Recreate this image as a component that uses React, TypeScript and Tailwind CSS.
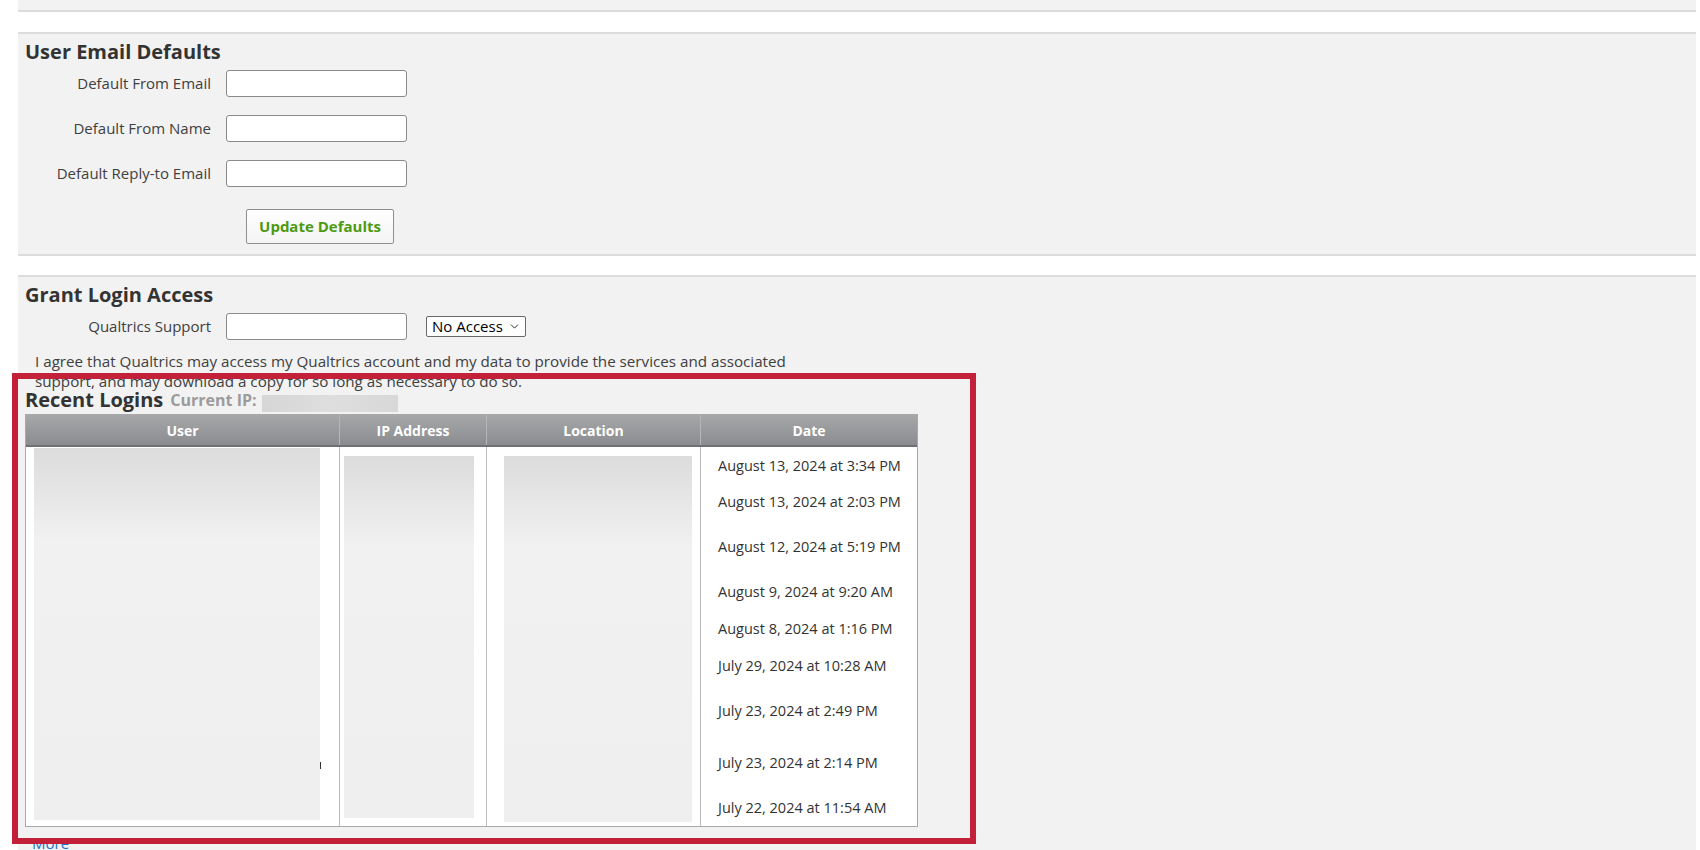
import { ChevronDown } from "lucide-react";

const emailFields = ["Default From Email", "Default From Name", "Default Reply-to Email"];

// row heights follow the (hidden) user cells, so every date gets its own slot
const logins = [
  { date: "August 13, 2024 at 3:34 PM", h: "h-[36px]" },
  { date: "August 13, 2024 at 2:03 PM", h: "h-[45px]" },
  { date: "August 12, 2024 at 5:19 PM", h: "h-[45px]" },
  { date: "August 9, 2024 at 9:20 AM", h: "h-[37px]" },
  { date: "August 8, 2024 at 1:16 PM", h: "h-[37px]" },
  { date: "July 29, 2024 at 10:28 AM", h: "h-[45px]" },
  { date: "July 23, 2024 at 2:49 PM", h: "h-[52px]" },
  { date: "July 23, 2024 at 2:14 PM", h: "h-[45px]" },
  { date: "July 22, 2024 at 11:54 AM", h: "h-[20px]" },
];

const TextInput = () => (
  <input
    type="text"
    className="w-[181px] h-[27px] bg-white border border-[#8a8a8a] rounded-[3px] px-1 text-[15px] outline-none"
  />
);

const Redacted = ({ className }: { className: string }) => (
  <div
    className={
      "bg-linear-to-b from-[#dcdcdc] via-[#f1f1f1] via-25% to-[#efefef] " + className
    }
  />
);

const App = () => {
  return (
    <div className="relative h-[850px] overflow-hidden bg-white font-['Open_Sans',sans-serif] text-[#404040]">
      <div className="pl-[18px] pr-[4px]">
        {/* tail of the section above */}
        <div className="h-[12px] bg-[#f2f2f2] border-b-2 border-[#dcdcdc]" />

        {/* User Email Defaults */}
        <section className="mt-[20px] bg-[#f2f2f2] border-y-2 border-[#dcdcdc] px-[7px] pt-[6px] pb-[10px]">
          <h2 className="text-[20px] leading-[24px] font-bold text-[#333]">User Email Defaults</h2>
          <div className="mt-[6px] flex flex-col gap-[18px]">
            {emailFields.map((label) => (
              <div key={label} className="flex items-center gap-[15px]">
                <label className="w-[186px] text-right text-[15px] leading-[27px]">{label}</label>
                <TextInput />
              </div>
            ))}
          </div>
          <button className="mt-[22px] ml-[221px] w-[148px] h-[35px] bg-linear-to-b from-white to-[#f4f4f4] border border-[#8f8f8f] rounded-[2px] text-[15px] font-bold text-[#4d9a12]">
            Update Defaults
          </button>
        </section>

        {/* Grant Login Access */}
        <section className="mt-[19px] bg-[#f2f2f2] border-t-2 border-[#dcdcdc] px-[7px] pt-[6px] pb-[40px]">
          <h2 className="text-[20px] leading-[24px] font-bold text-[#333]">Grant Login Access</h2>
          <div className="mt-[6px] flex items-center">
            <label className="w-[186px] text-right text-[15px] leading-[27px]">Qualtrics Support</label>
            <div className="ml-[15px]">
              <TextInput />
            </div>
            <div className="ml-[19px] w-[100px] h-[21px] flex items-center justify-between pl-[5px] pr-[4px] bg-white border border-[#6a6a6a] rounded-[2px] text-[15px] text-black">
              <span className="leading-[19px]">No Access</span>
              <ChevronDown size={13} strokeWidth={1.5} />
            </div>
          </div>
          <p className="mt-[11px] ml-[10px] w-[780px] text-[15.2px] leading-[20px]">
            I agree that Qualtrics may access my Qualtrics account and my data to provide the services and associated
            support, and may download a copy for so long as necessary to do so.
          </p>

          {/* Recent Logins */}
          <div className="flex items-start">
            <h2 className="text-[20px] leading-[18px] font-bold text-[#333]">Recent Logins</h2>
            <span className="ml-[7px] text-[16px] leading-[18px] font-bold text-[#9b9b9b]">Current IP:</span>
            <div className="ml-[5px] mt-[4px] w-[136px] h-[17px] bg-linear-to-r from-[#d6d6d6] via-[#dedede] to-[#d8d8d8]" />
          </div>

          <div className="mt-[2px] w-[893px] border border-[#a8a8a8] bg-white">
            <div className="grid grid-cols-[313px_147px_214px_217px] h-[32px] bg-linear-to-b from-[#a6a7a9] to-[#8b8c8f] border-b-2 border-[#6f7073] text-white text-[14px] font-bold">
              <div className="flex items-center justify-center">User</div>
              <div className="flex items-center justify-center border-l border-[#b6b6b8]">IP Address</div>
              <div className="flex items-center justify-center border-l border-[#b6b6b8]">Location</div>
              <div className="flex items-center justify-center border-l border-[#b6b6b8]">Date</div>
            </div>
            <div className="grid grid-cols-[313px_147px_214px_217px] h-[379px]">
              <div className="relative">
                <Redacted className="ml-[8px] mt-[1px] w-[286px] h-[372px]" />
                <span className="absolute left-[294px] top-[315px] w-[1px] h-[7px] bg-[#333]" />
              </div>
              <div className="border-l border-[#bcbcbc]">
                <Redacted className="ml-[4px] mt-[9px] w-[130px] h-[362px]" />
              </div>
              <div className="border-l border-[#bcbcbc]">
                <Redacted className="ml-[17px] mt-[9px] w-[188px] h-[366px]" />
              </div>
              <div className="border-l border-[#bcbcbc] pl-[17px] pt-[9px] flex flex-col text-[14.5px] leading-[20px] text-[#333]">
                {logins.map((l) => (
                  <div key={l.date} className={l.h}>
                    {l.date}
                  </div>
                ))}
              </div>
            </div>
          </div>
          <a className="block mt-[6px] ml-[7px] text-[15px] leading-[20px] text-[#1a74c9]">More</a>
        </section>
      </div>

      {/* red highlight drawn over the page */}
      <div className="absolute left-[12px] top-[373px] w-[964px] h-[471px] border-[6px] border-[#c3203a] pointer-events-none" />
    </div>
  );
};

export default App;
